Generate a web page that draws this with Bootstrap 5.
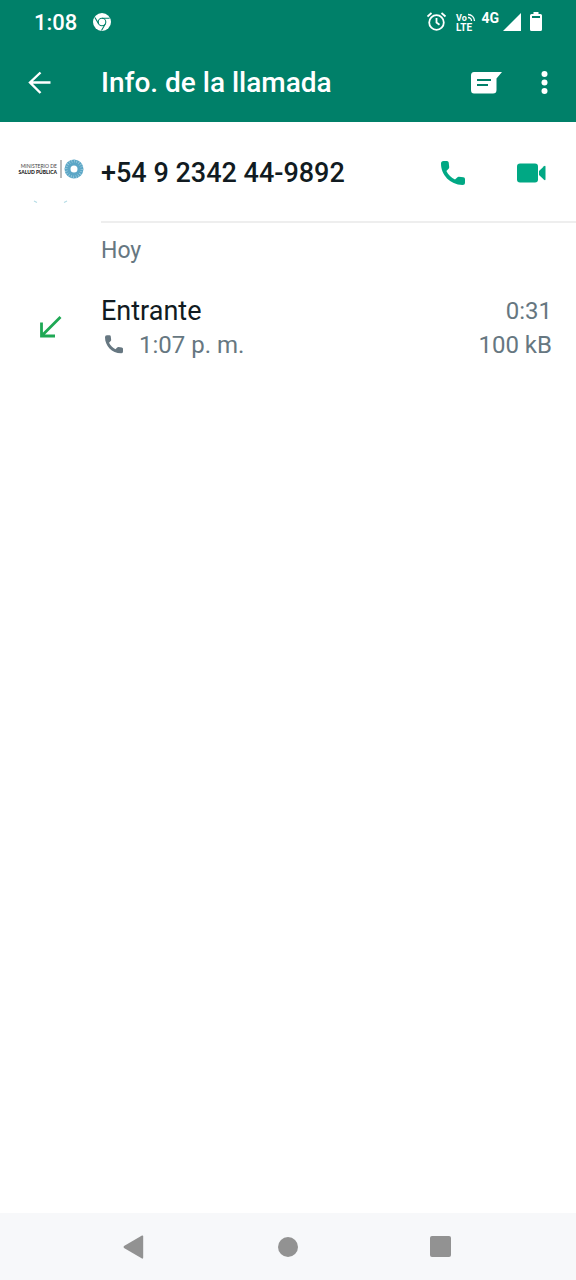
<!DOCTYPE html>
<html lang="es">
<head>
<meta charset="utf-8">
<meta name="viewport" content="width=device-width, initial-scale=1">
<title>Info. de la llamada</title>
<link href="https://cdn.jsdelivr.net/npm/bootstrap@5.3.0/dist/css/bootstrap.min.css" rel="stylesheet">
<style>
  body { font-family: Roboto, "Liberation Sans", sans-serif; color: #111b21; background: #fff; }
  svg { display: block; flex: none; }
  .wa-header { background: #008069; color: #fff; }
  .status-row { height: 44px; padding: 0 33px 0 34px; }
  .clock { font-size: 22px; line-height: 24px; font-weight: 500; padding-top: 2px; }
  .net-type { font-size: 14px; line-height: 16px; font-weight: 700; margin-bottom: 8px; }
  .title-row { height: 78px; padding: 0 8px 0 16px; }
  .icon-btn { background: none; border: 0; padding: 0; color: inherit; display: flex; align-items: center; justify-content: center; height: 48px; width: 48px; }
  .lead-col { flex: 0 0 101px; }
  .app-title { font-size: 28px; line-height: 32px; font-weight: 500; margin: 0 0 0 37px; }
  .contact { height: 101px; }
  .contact-body { border-bottom: 2px solid #eee; padding: 2px 20px 0 0; }
  .contact-actions { gap: 30px; }
  .phone-number { font-size: 27px; line-height: 32px; font-weight: 500; margin: 0; }
  .wa-accent { color: #00a884; }
  .muted { color: #667781; }
  .day { font-size: 23px; line-height: 28px; font-weight: 400; margin: 0; padding: 14px 0 29px 101px; }
  .call-kind { font-size: 27px; line-height: 34px; }
  .call-meta { font-size: 24px; line-height: 34px; }
  .call-row { padding-right: 24px; }
  .sys-nav { background: #f7f8fa; height: 67px; padding: 0 10%; color: #929292; }
</style>
</head>
<body>
<div class="d-flex flex-column min-vh-100">
  <header class="wa-header">
    <div class="status-row d-flex align-items-center">
      <span class="clock">1:08</span>
      <svg class="ms-3" width="18" height="18" viewBox="0 0 18 18" aria-label="Chrome" fill="none" stroke="#008069" stroke-width="1.1">
        <circle cx="9" cy="9" r="9" fill="#fff" stroke="none"/>
        <circle cx="9" cy="9" r="3.8"/>
        <path d="M9 5.2h7.6M5.7 10.9 1.9 4.5M12.3 10.9 8.5 17.5"/>
      </svg>
      <div class="d-flex align-items-center ms-auto">
        <svg width="20" height="20" viewBox="0 0 20 20" fill="none" stroke="#fff" stroke-width="1.8" aria-label="Alarma">
          <circle cx="9.5" cy="10.5" r="7.3"/>
          <path d="M9.500 6V10.500l3 2.200M.5 4.500l4-3.500M18.500 4.500l-4-3.500"/>
        </svg>
        <svg class="ms-2" width="22" height="20" viewBox="0 0 22 20" aria-label="VoLTE" fill="#fff" font-family="Roboto, sans-serif" font-weight="700">
          <text x="1" y="9" font-size="9">Vo</text>
          <text x="1" y="19" font-size="10">LTE</text>
          <path d="M13 5.5a3.5 3.5 0 0 1 3.5 3.5M13 2.5A6.5 6.5 0 0 1 19.5 9" fill="none" stroke="#fff" stroke-width="1.3"/>
        </svg>
        <span class="net-type ms-1">4G</span>
        <svg class="ms-1" width="18" height="18" viewBox="0 0 18 18" fill="#fff" aria-label="Señal"><path d="M0 18 18 0v18z"/></svg>
        <svg class="ms-2" width="14" height="20" viewBox="0 0 14 20" aria-label="Batería">
          <path d="M4.500 0h5v2h2q1.500 0 1.500 1.500v14q0 1.500-1.500 1.500h-9Q1 19 1 17.500v-14Q1 2 2.500 2h2z" fill="#fff"/>
          <path d="M3 4h8v2H3z" fill="#008069"/>
        </svg>
      </div>
    </div>
    <div class="title-row d-flex align-items-center">
      <button class="icon-btn" type="button" aria-label="Atrás">
        <svg width="24" height="24" viewBox="0 0 24 24" fill="none" stroke="#fff" stroke-width="2.4"><path d="M22.500 11.500H2M12.500 1.500 2 11.500l10.500 10.500"/></svg>
      </button>
      <h1 class="app-title">Info. de la llamada</h1>
      <button class="icon-btn ms-auto" type="button" aria-label="Mensaje">
        <svg width="34" height="22" viewBox="0 0 34 22"><path d="M3 0h28l-5.500 6.500V18q0 3.500-3.500 3.500H3Q0 21.500 0 18V3.500Q0 0 3 0z" fill="#fff"/><path d="M6 8h14M6 13h11" stroke="#008069" stroke-width="2.2"/></svg>
      </button>
      <button class="icon-btn ms-2" type="button" aria-label="Más opciones">
        <svg width="8" height="24" viewBox="0 0 8 24" fill="#fff"><circle cx="4.5" cy="3" r="3"/><circle cx="4.5" cy="11.5" r="3"/><circle cx="4.5" cy="20" r="3"/></svg>
      </button>
    </div>
  </header>

  <main class="flex-grow-1">
    <section class="contact d-flex">
      <div class="lead-col d-flex align-items-center ps-3">
        <svg width="70" height="64" viewBox="0 0 70 64" font-family="Lato, sans-serif" role="img" aria-label="Ministerio de Salud Pública">
          <text x="41" y="27" font-size="5" text-anchor="end" fill="#444">MINISTERIO DE</text>
          <text x="41" y="33" font-size="5" font-weight="900" text-anchor="end" fill="#222">SALUD PÚBLICA</text>
          <path d="M45 19v18" stroke="#777"/>
          <circle cx="58" cy="28" r="6.5" fill="none" stroke="#5ba6c6" stroke-width="6"/>
          <circle cx="58" cy="28" r="8" fill="none" stroke="#a9d3e3" stroke-width="3" stroke-dasharray=".6 1.9"/>
          <path d="M18 60l3 1.500M48 61.500l3-1.500" stroke="#b5dce6" stroke-width="1.2"/>
        </svg>
      </div>
      <div class="contact-body flex-grow-1 d-flex align-items-center">
        <h2 class="phone-number">+54 9 2342 44-9892</h2>
        <div class="contact-actions d-flex ms-auto">
          <button class="icon-btn wa-accent" type="button" aria-label="Llamar">
            <svg width="26" height="24" viewBox="0 0 26 24" fill="currentColor"><path d="M2.500 0H6q1.500 0 1.700 1.500l.5 4.500q.1 1-.6 1.700L5.400 9.900C7.200 13.600 10.400 16.800 14 18.600l2.200-2.200q.7-.7 1.700-.6l4.500.5q1.600.2 1.600 1.700v3.500q0 2.500-2.500 2.500C9 23.500 0 14 0 2.500Q0 0 2.500 0z"/></svg>
          </button>
          <button class="icon-btn wa-accent" type="button" aria-label="Videollamada">
            <svg width="30" height="20" viewBox="0 0 30 20" fill="currentColor"><rect y=".5" width="21" height="19" rx="3"/><path d="M22 8l5-4.800q1.500-1.200 1.500.8v12q0 2-1.500.8L22 12z"/></svg>
          </button>
        </div>
      </div>
    </section>

    <section>
      <h3 class="day muted">Hoy</h3>
      <div class="call-row d-flex align-items-center">
        <div class="lead-col d-flex justify-content-center">
          <svg width="24" height="24" viewBox="0 0 24 24" fill="none" stroke="#1fa855" stroke-width="2.8" aria-label="Llamada entrante"><path d="M21.500 1 2.500 20M2.500 6.500V20H16"/></svg>
        </div>
        <div class="flex-grow-1">
          <div class="call-kind">Entrante</div>
          <div class="call-meta muted d-flex align-items-center">
            <svg class="ms-1 me-3" width="18" height="20" viewBox="0 0 24 26" fill="currentColor" aria-hidden="true"><path d="M2.500 0H6q1.500 0 1.700 1.500l.5 4.500q.1 1-.6 1.700L5.400 9.900C7.200 13.600 10.400 16.800 14 18.600l2.200-2.200q.7-.7 1.700-.6l4.500.5q1.600.2 1.600 1.700v3.500q0 2.500-2.500 2.500C9 23.500 0 14 0 2.500Q0 0 2.500 0z"/></svg>
            <span>1:07 p. m.</span>
          </div>
        </div>
        <div class="call-meta muted text-end">
          <div>0:31</div>
          <div>100 kB</div>
        </div>
      </div>
    </section>
  </main>

  <nav class="sys-nav row row-cols-3 g-0 align-items-center" aria-label="Sistema">
    <div class="col d-flex justify-content-center"><button class="icon-btn" type="button" aria-label="Volver">
      <svg width="22" height="24" viewBox="0 0 22 24" fill="currentColor"><path d="M1 11q-1 1 0 2l18 10.500q1.200.5 1.200-1v-21q0-1.500-1.200-1z"/></svg></button></div>
    <div class="col d-flex justify-content-center"><button class="icon-btn" type="button" aria-label="Inicio">
      <svg width="20" height="20" viewBox="0 0 20 20" fill="currentColor"><circle cx="10" cy="10" r="10"/></svg></button></div>
    <div class="col d-flex justify-content-center"><button class="icon-btn" type="button" aria-label="Recientes">
      <svg width="24" height="22" viewBox="0 0 24 22" fill="currentColor"><rect width="21" height="21" rx="2"/></svg></button></div>
  </nav>
</div>
<script src="https://cdn.jsdelivr.net/npm/bootstrap@5.3.0/dist/js/bootstrap.bundle.min.js"></script>
</body>
</html>
